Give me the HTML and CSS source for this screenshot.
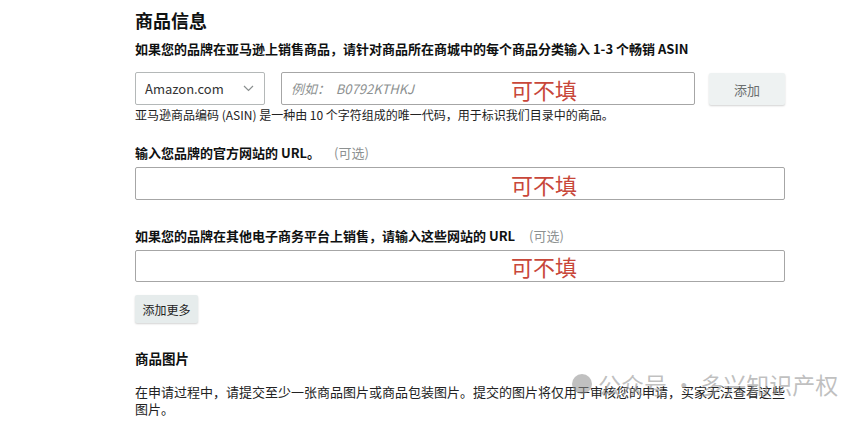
FILE: index.html
```html
<!DOCTYPE html>
<html lang="zh-CN">
<head>
  <meta charset="UTF-8" />
  <title>商品信息</title>
  <link rel="stylesheet" href="styles.css">
</head>
<body>
  <div class="form">
    <h1>商品信息</h1>
    <div class="lead">如果您的品牌在亚马逊上销售商品，请针对商品所在商城中的每个商品分类输入 1-3 个畅销 ASIN</div>

    <div class="asin-row">
      <div class="select">
        <span>Amazon.com</span>
        <svg width="11" height="7" viewBox="0 0 11 7"><path d="M1 1l4.5 4.5L10 1" fill="none" stroke="#8a8f8f" stroke-width="1.2"/></svg>
      </div>
      <div class="field asin">
        <span class="placeholder">例如：&nbsp; B0792KTHKJ</span>
        <span class="note">可不填</span>
      </div>
      <button class="btn add">添加</button>
    </div>
    <div class="hint">亚马逊商品编码 (ASIN) 是一种由 10 个字符组成的唯一代码，用于标识我们目录中的商品。</div>

    <div class="label first">输入您品牌的官方网站的 URL。<span class="opt">(可选)</span></div>
    <div class="field wide"><span class="note">可不填</span></div>

    <div class="label second">如果您的品牌在其他电子商务平台上销售，请输入这些网站的 URL<span class="opt">(可选)</span></div>
    <div class="field wide short"><span class="note">可不填</span></div>

    <button class="btn more">添加更多</button>

    <h2>商品图片</h2>
    <p class="desc">在申请过程中，请提交至少一张商品图片或商品包装图片。提交的图片将仅用于审核您的申请，买家无法查看这些图片。</p>
  </div>

  <div class="watermark">
    <span class="wm-icon"></span>
    <span>公众号 · 多兴知识产权</span>
  </div>
</body>
</html>
```

FILE: styles.css
```css
* { margin: 0; padding: 0; box-sizing: border-box; }

body {
  background: #fff;
  color: #0f1111;
  font-family: "Noto Sans CJK SC", "Noto Sans", sans-serif;
  position: relative;
  height: 424px;
  overflow: hidden;
}

.form {
  width: 650px;
  margin-left: 135px;
}

h1 {
  font-size: 18px;
  line-height: 24px;
  font-weight: 700;
  margin-top: 8px;
}

.lead {
  font-size: 13px;
  line-height: 18px;
  font-weight: 700;
  margin-top: 8px;
}

.asin-row {
  display: flex;
  align-items: flex-start;
  margin-top: 14px;
}

.select {
  width: 130px;
  height: 33px;
  border: 1px solid #b4b8b8;
  border-radius: 2px;
  display: flex;
  align-items: center;
  justify-content: space-between;
  padding: 0 10px 0 9px;
  font-size: 13px;
  color: #333;
}

.field {
  position: relative;
  height: 33px;
  border: 1px solid #a6a6a6;
  border-radius: 2px;
  background: #fff;
}

.field.asin {
  width: 414px;
  margin-left: 16px;
  display: flex;
  align-items: center;
  padding-left: 9px;
}

.placeholder {
  font-size: 13px;
  font-style: italic;
  color: #8d9191;
}

.note {
  position: absolute;
  top: 50%;
  transform: translateY(-50%);
  font-size: 22px;
  line-height: 26px;
  color: #c8473a;
}

.asin .note { left: 229px; }
.wide .note { left: 375px; }

.btn {
  font-family: inherit;
  border: none;
  border-radius: 2px;
  background: #eef2f2;
  box-shadow: 0 1px 2px rgba(0, 0, 0, 0.18);
  cursor: pointer;
}

.btn.add {
  width: 76px;
  height: 32px;
  margin-left: 14px;
  margin-top: 1px;
  font-size: 13px;
  color: #6b6f6f;
}

.hint {
  font-size: 12px;
  line-height: 16px;
  margin-top: 2px;
  color: #222;
}

.label {
  font-size: 13px;
  line-height: 18px;
  font-weight: 700;
}

.label.first { margin-top: 21px; }
.label.second { margin-top: 27px; }

.opt {
  font-weight: 400;
  color: #8d9191;
  margin-left: 14px;
}

.field.wide {
  width: 650px;
  margin-top: 5px;
}

.field.short { height: 32px; }

.btn.more {
  display: block;
  width: 63px;
  height: 28px;
  margin-top: 13px;
  font-size: 12px;
  color: #222;
  background: #e6ecec;
}

h2 {
  font-size: 13.5px;
  line-height: 20px;
  font-weight: 700;
  margin-top: 25px;
}

.desc {
  font-size: 13px;
  line-height: 17px;
  margin-top: 15px;
  color: #222;
}

.watermark {
  position: absolute;
  left: 572px;
  top: 370px;
  display: flex;
  align-items: center;
  gap: 6px;
  font-size: 23px;
  line-height: 28px;
  color: rgba(150, 150, 150, 0.6);
}

.wm-icon {
  width: 20px;
  height: 20px;
  border-radius: 50%;
  background: rgba(140, 140, 140, 0.55);
}
```
